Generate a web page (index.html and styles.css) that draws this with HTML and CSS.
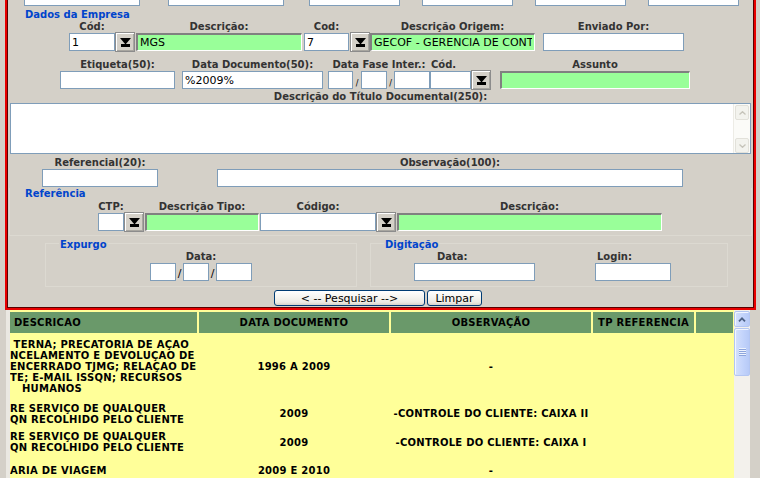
FILE: index.html
```html
<!DOCTYPE html>
<html lang="pt-BR">
<head>
<meta charset="utf-8">
<title>Pesquisa de Documentos</title>
<link rel="stylesheet" href="styles.css">
</head>
<body>
<div class="panel">
  <div class="frow toprow">
    <input class="txt w116 m17"><input class="txt w116 m28"><input class="txt w91 m25"><input class="txt w91 m22"><input class="txt w91 m22"><input class="txt w91 m22">
  </div>

  <div class="sec">Dados da Empresa</div>
  <div class="frow">
    <div class="field m62"><span class="lbl">Cód:</span><input class="txt w46" value="1"></div>
    <button class="dd"><svg width="11" height="9" viewBox="0 0 11 9"><path d="M0 0H11L5.5 6.5Z"/><rect x="1" y="6" width="9" height="3"/></svg></button>
    <div class="field m1"><span class="lbl">Descrição:</span><input class="txt ro w166" value="MGS" readonly></div>
    <div class="field m2"><span class="lbl">Cod:</span><input class="txt w45" value="7"></div>
    <button class="dd m1"><svg width="11" height="9" viewBox="0 0 11 9"><path d="M0 0H11L5.5 6.5Z"/><rect x="1" y="6" width="9" height="3"/></svg></button>
    <div class="field"><span class="lbl">Descrição Origem:</span><input class="txt ro w165" value="GECOF - GERENCIA DE CONTROLE" readonly></div>
    <div class="field m8"><span class="lbl">Enviado Por:</span><input class="txt w141"></div>
  </div>

  <div class="frow r2">
    <div class="field m53"><span class="lbl">Etiqueta(50):</span><input class="txt w115"></div>
    <div class="field m7"><span class="lbl">Data Documento(50):</span><input class="txt w141" value="%2009%"></div>
    <div class="field m5"><span class="lbl">Data Fase Inter.:</span>
      <div class="dgrp"><input class="txt w25"><span class="sl sls w8">/</span><input class="txt w26"><span class="sl sls w7">/</span><input class="txt w36"></div>
    </div>
    <div class="field"><span class="lbl-l pl1">Cód.</span><input class="txt w41"></div>
    <button class="dd"><svg width="11" height="9" viewBox="0 0 11 9"><path d="M0 0H11L5.5 6.5Z"/><rect x="1" y="6" width="9" height="3"/></svg></button>
    <div class="field m9"><span class="lbl">Assunto</span><input class="txt ro w190" readonly></div>
  </div>

  <div class="frow r3">
    <div class="field m3">
      <span class="lbl">Descrição do Título Documental(250):</span>
      <div class="ta">
        <div class="tasb">
          <div class="tabtn"><svg width="7" height="4" viewBox="0 0 7 4"><polyline points="0.5,3.5 3.5,0.7 6.5,3.5" fill="none" stroke="#C6C4BA" stroke-width="1.3"/></svg></div>
          <div class="tabtn"><svg width="7" height="4" viewBox="0 0 7 4"><polyline points="0.5,0.5 3.5,3.3 6.5,0.5" fill="none" stroke="#C6C4BA" stroke-width="1.3"/></svg></div>
        </div>
      </div>
    </div>
  </div>

  <div class="frow r4">
    <div class="field m35"><span class="lbl">Referencial(20):</span><input class="txt w116"></div>
    <div class="field m59"><span class="lbl">Observação(100):</span><input class="txt w466"></div>
  </div>

  <div class="ref">
    <div class="sec sec-ref">Referência</div>
    <div class="frow r5">
      <div class="field m88"><span class="lbl">CTP:</span><input class="txt w26"></div>
      <button class="dd"><svg width="11" height="9" viewBox="0 0 11 9"><path d="M0 0H11L5.5 6.5Z"/><rect x="1" y="6" width="9" height="3"/></svg></button>
      <div class="field m1"><span class="lbl">Descrição Tipo:</span><input class="txt ro w114" readonly></div>
      <div class="field m1"><span class="lbl">Código:</span><input class="txt w116"></div>
      <button class="dd"><svg width="11" height="9" viewBox="0 0 11 9"><path d="M0 0H11L5.5 6.5Z"/><rect x="1" y="6" width="9" height="3"/></svg></button>
      <div class="field m1"><span class="lbl">Descrição:</span><input class="txt ro w265" readonly></div>
    </div>
  </div>

  <div class="fsrow">
    <fieldset class="fs fs-exp">
      <legend>Expurgo</legend>
      <div class="frow">
        <div class="field m104"><span class="lbl">Data:</span>
          <div class="dgrp"><input class="txt w26"><span class="sl w7">/</span><input class="txt w26"><span class="sl w7">/</span><input class="txt w36"></div>
        </div>
      </div>
    </fieldset>
    <fieldset class="fs fs-dig">
      <legend>Digitação</legend>
      <div class="frow">
        <div class="field m43"><span class="lbl-l pl23">Data:</span><input class="txt w121"></div>
        <div class="field m60"><span class="lbl-l pl2">Login:</span><input class="txt w76"></div>
      </div>
    </fieldset>
  </div>

  <div class="btns">
    <button class="btn w151">&lt; -- Pesquisar --&gt;</button>
    <button class="btn w55 m2">Limpar</button>
  </div>
</div>

<div class="results">
  <div class="tview">
    <table class="grid">
      <colgroup><col class="c1"><col class="c2"><col class="c3"><col class="c4"><col class="c5"></colgroup>
      <thead>
        <tr><th class="h1">DESCRICAO</th><th>DATA DOCUMENTO</th><th>OBSERVAÇÃO</th><th>TP REFERENCIA</th><th></th></tr>
      </thead>
      <tbody>
        <tr class="ra">
          <td class="d1">
            <div class="pr8">TERNA; PRECATORIA DE AÇAO</div>
            <div class="pr7">NCELAMENTO E DEVOLUÇAO DE</div>
            <div class="pr5">ENCERRADO TJMG; RELAÇAO DE</div>
            <div class="pr18">TE; E-MAIL ISSQN; RECURSOS</div>
            <div class="pr115">HUMANOS</div>
          </td>
          <td>1996 A 2009</td><td>-</td><td></td><td></td>
        </tr>
        <tr class="rb">
          <td class="d1"><div class="pr31">RE SERVIÇO DE QUALQUER</div><div class="pr17">QN RECOLHIDO PELO CLIENTE</div></td>
          <td>2009</td><td>-CONTROLE DO CLIENTE: CAIXA II</td><td></td><td></td>
        </tr>
        <tr class="rc">
          <td class="d1"><div class="pr31">RE SERVIÇO DE QUALQUER</div><div class="pr17">QN RECOLHIDO PELO CLIENTE</div></td>
          <td>2009</td><td>-CONTROLE DO CLIENTE: CAIXA I</td><td></td><td></td>
        </tr>
        <tr class="rd">
          <td class="d1"><div class="pr91">ARIA DE VIAGEM</div></td>
          <td>2009 E 2010</td><td>-</td><td></td><td></td>
        </tr>
      </tbody>
    </table>
  </div>
  <div class="vsb">
    <div class="sbtn"><svg width="8" height="5" viewBox="0 0 8 5"><polyline points="1,4.3 4,1.3 7,4.3" fill="none" stroke="#4D6185" stroke-width="1.8"/></svg></div>
    <div class="thumb"><svg width="7" height="8" viewBox="0 0 7 8"><rect y="0" width="7" height="1" fill="#EEF3FE"/><rect y="1" width="7" height="1" fill="#8DA5DC"/><rect y="2" width="7" height="1" fill="#EEF3FE"/><rect y="3" width="7" height="1" fill="#8DA5DC"/><rect y="4" width="7" height="1" fill="#EEF3FE"/><rect y="5" width="7" height="1" fill="#8DA5DC"/><rect y="6" width="7" height="1" fill="#EEF3FE"/><rect y="7" width="7" height="1" fill="#8DA5DC"/></svg></div>
  </div>
</div>
</body>
</html>
```

FILE: styles.css
```css
* { box-sizing: border-box; }
html, body { margin: 0; padding: 0; }
body {
  width: 760px;
  height: 478px;
  overflow: hidden;
  background: #D4D0C8;
  font-family: "DejaVu Sans", Verdana, sans-serif;
  font-size: 10px;
  color: #333;
}

/* ---------- form panel ---------- */
.panel {
  margin: -16px 0 0 5px;
  width: 751px;
  border: 2px solid #E80000;
  box-shadow: inset 0 0 0 1px #5A0000;
  padding: 2px 0 2px 0;
}
.frow { display: flex; align-items: flex-end; }
.toprow { height: 18px; }
.r2 { margin-top: 8px; }
.r3 { margin-top: 2px; }
.r4 { margin-top: 3px; }
.r5 { margin-top: 1px; }

.field { display: flex; flex-direction: column; align-items: center; }
.lbl {
  width: 0;
  height: 12px;
  line-height: 12px;
  display: flex;
  justify-content: center;
  white-space: nowrap;
  font-weight: bold;
  color: #333;
}
.lbl-l {
  align-self: flex-start;
  height: 12px;
  line-height: 12px;
  white-space: nowrap;
  font-weight: bold;
  color: #333;
}
.sec {
  height: 12px;
  line-height: 12px;
  margin: 3px 0 0 18px;
  font-weight: bold;
  color: #0044CC;
}
.sec-ref { margin: 0 0 0 15px; }

.txt {
  display: block;
  margin: 0;
  height: 18px;
  padding: 0 2px;
  border: 1px solid #7F9DB9;
  background: #fff;
  font: 11px "DejaVu Sans", Verdana, sans-serif;
  color: #000;
  outline: none;
}
.ro {
  background: #99FF99;
  border-width: 2px 1px 1px 2px;
  border-style: solid;
  border-color: #808080 #FFFFFF #FFFFFF #808080;
}
.dd {
  width: 20px;
  height: 20px;
  margin-bottom: -1px;
  padding: 0;
  border: 1px solid #8C8C8C;
  background: #D4D0C8;
  box-shadow: inset 1px 1px 0 #FFFFFF, inset -1px -1px 0 #A8A6A0;
  display: flex;
  align-items: center;
  justify-content: center;
}
.dd svg { display: block; fill: #000; }

.dgrp { display: flex; align-items: flex-end; }
.sl {
  height: 18px;
  display: flex;
  align-items: flex-end;
  justify-content: center;
  font: 11px "DejaVu Sans", Verdana, sans-serif;
  color: #000;
  line-height: 14px;
}
.sls { font-size: 8px; line-height: 10px; }

/* textarea look-alike */
.ta {
  width: 741px;
  height: 51px;
  border: 1px solid #7F9DB9;
  background: #fff;
  display: flex;
  justify-content: flex-end;
}
.tasb {
  width: 17px;
  height: 100%;
  background: #FBFBF8;
  border-left: 1px solid #EDECE6;
  padding: 1px 1px 0 1px;
  display: flex;
  flex-direction: column;
  justify-content: space-between;
}
.tabtn {
  height: 15px;
  border: 1px solid #E2E1DA;
  border-radius: 2px;
  background: #F3F3EE;
  display: flex;
  align-items: center;
  justify-content: center;
}
.tabtn svg { display: block; }

/* referência block */
.ref {
  margin: 1px 0 0 2px;
  width: 743px;
  padding-bottom: 4px;
  border: 1px solid #DCD9D1;
  border-top: none;
}

/* fieldsets */
.fsrow { display: flex; }
.fs {
  margin: 0;
  padding: 0 0 5px 0;
  border: 1px solid #DCD9D1;
  min-width: 0;
}
.fs legend {
  margin-left: 13px;
  padding: 3px 1px 0 1px;
  line-height: 12px;
  font-weight: bold;
  color: #0044CC;
}
.fs-exp { margin-left: 38px; width: 312px; }
.fs-dig { margin-left: 13px; width: 358px; }

/* buttons */
.btns { display: flex; margin: 3px 0 0 267px; }
.btn {
  height: 16px;
  padding: 0;
  border: 1px solid #003C74;
  border-radius: 3px;
  background: linear-gradient(#FFFFFF, #F5F4F0 45%, #ECEAE3 80%, #D8D3C8);
  font: 11px "DejaVu Sans", Verdana, sans-serif;
  color: #000;
  line-height: 13px;
}

/* widths */
.w7 { width: 7px; } .w8 { width: 8px; }
.w25 { width: 25px; } .w26 { width: 26px; } .w36 { width: 36px; } .w41 { width: 41px; }
.w45 { width: 45px; } .w46 { width: 46px; } .w55 { width: 55px; } .w76 { width: 76px; }
.w91 { width: 91px; } .w114 { width: 114px; } .w115 { width: 115px; } .w116 { width: 116px; }
.w121 { width: 121px; } .w141 { width: 141px; } .w151 { width: 151px; } .w165 { width: 165px; }
.w166 { width: 166px; } .w190 { width: 190px; } .w265 { width: 265px; } .w466 { width: 466px; }

/* offsets in the flow */
.m1 { margin-left: 1px; } .m2 { margin-left: 2px; } .m3 { margin-left: 3px; } .m5 { margin-left: 5px; }
.m7 { margin-left: 7px; } .m8 { margin-left: 8px; } .m9 { margin-left: 9px; } .m17 { margin-left: 17px; }
.m22 { margin-left: 22px; } .m25 { margin-left: 25px; } .m28 { margin-left: 28px; } .m35 { margin-left: 35px; }
.m43 { margin-left: 43px; } .m53 { margin-left: 53px; } .m59 { margin-left: 59px; } .m60 { margin-left: 60px; }
.m62 { margin-left: 62px; } .m88 { margin-left: 88px; } .m104 { margin-left: 104px; }
.pl1 { padding-left: 1px; } .pl2 { padding-left: 2px; } .pl23 { padding-left: 23px; }

/* ---------- results grid ---------- */
.results {
  display: flex;
  margin-left: 6px;
  width: 744px;
  height: 168px;
  border-left: 4px solid #EAE8E2;
  background: #FFFF99;
}
.tview { width: 724px; height: 100%; overflow: hidden; background: #FFFF99; }
.grid {
  table-layout: fixed;
  width: 727px;
  margin-left: -2px;
  border-spacing: 2px;
  background: #FFFF99;
  font: bold 10px "DejaVu Sans", Verdana, sans-serif;
  letter-spacing: 0.25px;
  color: #000;
}
.c1 { width: 187px; } .c2 { width: 190px; } .c3 { width: 200px; } .c4 { width: 101px; } .c5 { width: 37px; }
.grid th {
  height: 21px;
  padding: 0;
  background: #6A996A;
  font-weight: bold;
  text-align: center;
  vertical-align: middle;
  white-space: nowrap;
  color: #000;
}
.grid th.h1 { text-align: left; text-indent: 4px; }
.grid td {
  padding: 0;
  text-align: center;
  vertical-align: middle;
  white-space: nowrap;
  overflow: hidden;
}
.grid td.d1 { text-align: right; }
.ra { height: 63px; } .rb { height: 27px; } .rc { height: 26px; } .rd { height: 26px; }
.pr5 { padding-right: 5px; } .pr7 { padding-right: 7px; } .pr8 { padding-right: 8px; }
.pr17 { padding-right: 17px; } .pr18 { padding-right: 18px; } .pr31 { padding-right: 31px; }
.pr91 { padding-right: 91px; } .pr115 { padding-right: 115px; }

/* XP style scrollbar */
.vsb {
  width: 16px;
  height: 100%;
  background: #F3F1EC;
  padding-top: 1px;
  display: flex;
  flex-direction: column;
  gap: 1px;
}
.sbtn, .thumb {
  border: 1px solid #B3C6F2;
  border-radius: 2px;
  background: linear-gradient(to right, #D5E1FD, #C2D3FB 60%, #B7CAF7);
  box-shadow: inset 1px 1px 0 #F2F6FF;
  display: flex;
  align-items: center;
  justify-content: center;
}
.sbtn { height: 16px; }
.thumb { height: 48px; }
.sbtn svg, .thumb svg { display: block; }
```
